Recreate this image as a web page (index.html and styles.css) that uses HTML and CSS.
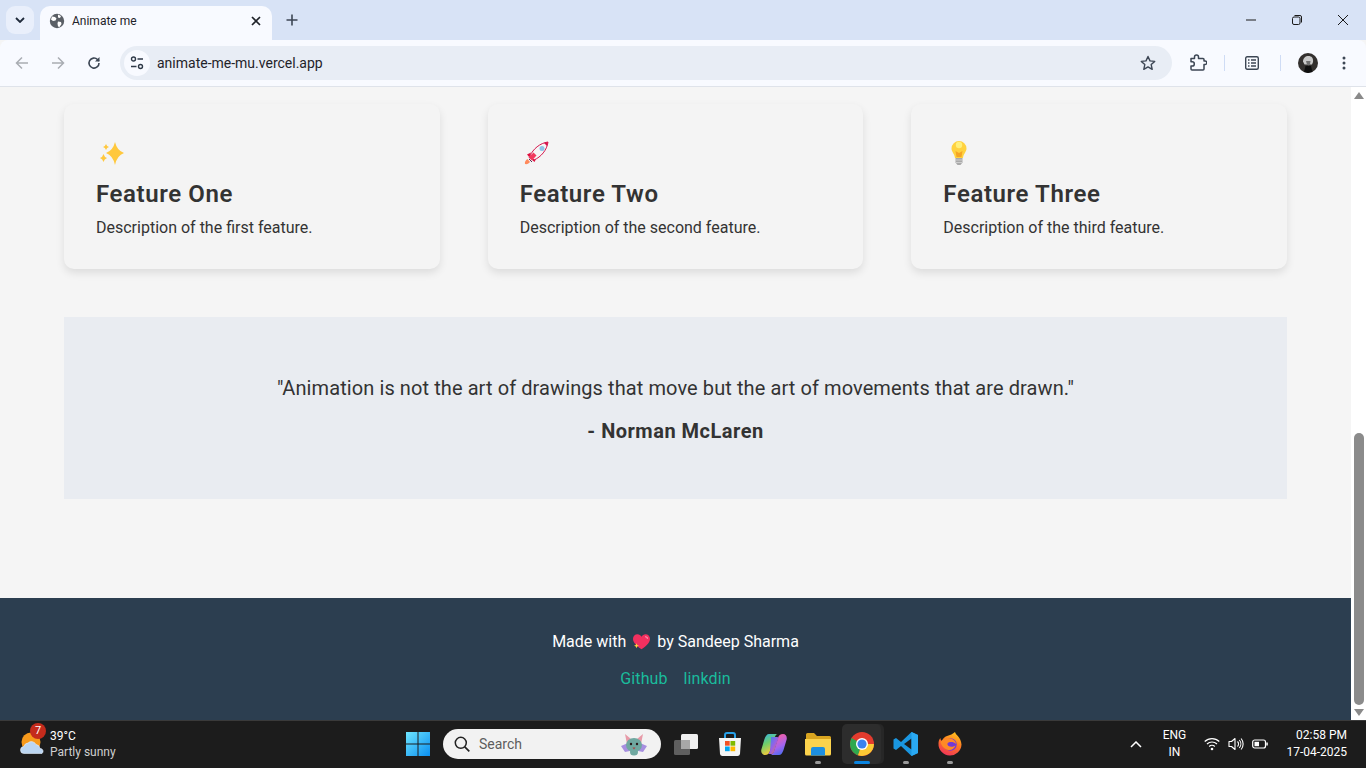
FILE: index.html
```html
<!DOCTYPE html>
<html lang="en">
<head>
<meta charset="utf-8">
<title>Animate me</title>
<link rel="stylesheet" href="styles.css">
</head>
<body>
<div class="tabbar">
  <div class="tab-search"><svg width="10" height="6" viewBox="0 0 10 6"><path d="M1 1l4 4 4-4" fill="none" stroke="#1f2a3a" stroke-width="1.8"/></svg></div>
  <div class="tab">
    <svg class="favicon" width="16" height="16" viewBox="0 0 16 16"><circle cx="8" cy="8" r="7.2" fill="#5a5f66"/><path d="M3 3.500l3 .5 1.500 1.500-1 2-2.500.5-2-1.500zM9 8.500l3 .5 .5 2-2 3-1.500-.5-.5-3zM9 1.500l3 1.500-1 2-2-.5z" fill="#fff"/></svg>
    <span class="tab-title">Animate me</span>
    <svg class="tab-close" width="10" height="10" viewBox="0 0 10 10"><path d="M1 1l8 8M9 1l-8 8" stroke="#1f2329" stroke-width="1.7"/></svg>
  </div>
  <svg class="newtab" width="12" height="12" viewBox="0 0 12 12"><path d="M6 .5v11M.5 6h11" stroke="#3c4654" stroke-width="1.6"/></svg>
  <div class="winctl">
    <svg width="10" height="10" viewBox="0 0 10 10"><path d="M0 5h10" stroke="#1a1a1a" stroke-width="1"/></svg>
    <svg width="10" height="10" viewBox="0 0 10 10"><rect x=".5" y="2" width="7.500" height="7.500" rx="1.500" fill="none" stroke="#1a1a1a"/><path d="M2.500 .5h5.500a1.500 1.500 0 0 1 1.500 1.500v5.500" fill="none" stroke="#1a1a1a"/></svg>
    <svg width="10" height="10" viewBox="0 0 10 10"><path d="M0 0l10 10M10 0l-10 10" stroke="#1a1a1a" stroke-width="1"/></svg>
  </div>
</div>
<div class="toolbar">
  <svg class="nav first" width="14" height="14" viewBox="0 0 14 14"><path d="M13 7H2M7 1.500L1.500 7 7 12.500" fill="none" stroke="#a9adb3" stroke-width="1.5"/></svg>
  <svg class="nav" width="14" height="14" viewBox="0 0 14 14"><path d="M1 7h11M7 1.500L12.500 7 7 12.500" fill="none" stroke="#a9adb3" stroke-width="1.5"/></svg>
  <svg class="nav" width="14" height="14" viewBox="0 0 14 14"><path d="M12 7a5 5 0 1 1-1.500-3.500L12 5" fill="none" stroke="#3c4654" stroke-width="1.600"/><path d="M12.500 1v4.500H8z" fill="#3c4654"/></svg>
  <div class="omnibox">
    <div class="site-btn"><svg width="14" height="14" viewBox="0 0 14 14"><circle cx="3.500" cy="3" r="2" fill="none" stroke="#2f3a48" stroke-width="1.400"/><path d="M7.500 3H13M1 10.500h5.500" stroke="#2f3a48" stroke-width="1.400"/><circle cx="10.500" cy="10.500" r="2" fill="none" stroke="#2f3a48" stroke-width="1.400"/></svg></div>
    <span class="url">animate-me-mu.vercel.app</span>
    <svg class="star" width="16" height="16" viewBox="0 0 16 16"><path d="M8 1.500l2 4.400 4.700.5-3.500 3.200 1 4.700L8 11.900l-4.200 2.400 1-4.700L1.300 6.400 6 5.900z" fill="none" stroke="#3c4654" stroke-width="1.400" stroke-linejoin="round"/></svg>
  </div>
  <svg class="ext" width="17" height="17" viewBox="0 0 17 17"><path d="M1 4.500H4.500V3a2 2 0 0 1 4 0V4.500H13a1 1 0 0 1 1 1V7h1a1.800 1.800 0 0 1 0 3.600H14V15a1 1 0 0 1-1 1H2a1 1 0 0 1-1-1V12H2.200a2 2 0 0 0 0-4.200H1z" fill="none" stroke="#3c4654" stroke-width="1.500" stroke-linejoin="round"/></svg>
  <span class="divider first-div"></span>
  <svg class="reading" width="14" height="14" viewBox="0 0 14 14"><rect x=".7" y=".7" width="12.600" height="12.600" rx="1.500" fill="none" stroke="#3c4654" stroke-width="1.400"/><path d="M3 4h1.500M6 4h5M3 7h1.500M6 7h5M3 10h1.500M6 10h5" stroke="#3c4654" stroke-width="1.300"/></svg>
  <span class="divider second-div"></span>
  <svg class="avatar" width="20" height="20" viewBox="0 0 20 20"><circle cx="10" cy="10" r="10" fill="#33302e"/><path d="M5 8.500C5 5 7.500 3 10.500 3S15.500 5 15 9l-1 2.500H6.500z" fill="#c9c9c9"/><path d="M8 8h4.500l-.5 3.500-1.500 1-1.500-1z" fill="#6f6f6f"/><path d="M6 19l1.500-6h5.500l1.500 6-4.500 1z" fill="#0e0e0e"/></svg>
  <svg class="kebab" width="4" height="14" viewBox="0 0 4 14"><circle cx="2" cy="2" r="1.500" fill="#3c4654"/><circle cx="2" cy="7" r="1.500" fill="#3c4654"/><circle cx="2" cy="12" r="1.500" fill="#3c4654"/></svg>
</div>

<div class="viewport">
  <div class="page">
    <main class="content">
      <section class="features">
        <article class="card">
          <svg class="emoji" width="28" height="28" viewBox="0 0 28 28"><path d="M17 3Q19 11.500 26 14 19 16.500 17 26 15 16.500 8 14 15 11.500 17 3z" fill="#ffc83d"/><path d="M8 5Q8.700 7.300 11 8 8.700 8.700 8 11 7.300 8.700 5 8 7.300 7.300 8 5zM5.500 15Q6.300 18 9 19 6.300 20 5.500 23 4.700 20 2 19 4.700 18 5.500 15z" fill="#ffc83d"/></svg>
          <h3 class="card-title">Feature One</h3>
          <p class="card-text">Description of the first feature.</p>
        </article>
        <article class="card">
          <svg class="emoji" width="28" height="28" viewBox="0 0 28 28"><path d="M3 25c-.5-2 .5-4 2.500-5l2.500 3c-1 1.500-3 2.500-5 2z" fill="#ff8a5c"/><path d="M5 15.500l4-2-1.500 5zM12.500 23l2-4-5 1.500z" fill="#e0103f"/><path d="M8 17C11 10 18 4 26 3c-1 8-7 15-14 18z" fill="#f5f5f5" stroke="#d6154c" stroke-width="1"/><path d="M6.500 18.500l5-5 3 3-4.500 5z" fill="#f23a5e"/><path d="M7 20l3 3" stroke="#553355" stroke-width="1"/><path d="M22 4l4-1-1 4z" fill="#d6154c"/><circle cx="20" cy="9.500" r="2.500" fill="#8cc4e8"/></svg>
          <h3 class="card-title">Feature Two</h3>
          <p class="card-text">Description of the second feature.</p>
        </article>
        <article class="card">
          <svg class="emoji" width="28" height="28" viewBox="0 0 28 28"><path d="M14 2a7.500 7.500 0 0 0-7.500 7.500c0 3.500 3 5 3.500 9.500h8c.5-4.500 3.500-6 3.500-9.500A7.500 7.500 0 0 0 14 2z" fill="#ffd23f"/><circle cx="14" cy="6" r="3.200" fill="#fff07a"/><path d="M11.500 18l-1-6 3.500 2 3.500-2-1 6z" fill="#f5a524"/><path d="M10.500 19h7v4.500l-2 2.500h-3l-2-2.500z" fill="#a9a9a9"/><path d="M10.500 21h7M11 23.500h6" stroke="#d8d8d8" stroke-width=".8"/></svg>
          <h3 class="card-title">Feature Three</h3>
          <p class="card-text">Description of the third feature.</p>
        </article>
      </section>
      <section class="quote">
        <p class="quote-text">"Animation is not the art of drawings that move but the art of movements that are drawn."</p>
        <p class="quote-author">- Norman McLaren</p>
      </section>
    </main>
    <footer class="footer">
      <p class="made">Made with
        <svg class="heart" width="17" height="16" viewBox="1 2 17 15.500"><path d="M9.500 17C3 12.500 1 9.500 1 6.500 1 4 3 2 5.500 2c1.700 0 3.200 1 4 2.500C10.300 3 11.800 2 13.500 2 16 2 18 4 18 6.500c0 3-2 6-8.500 10.500z" fill="#f2305f"/><path d="M13 4.500c1.500 0 2.500 1 2.500 2" stroke="#ff9ab5" stroke-width="1.200" fill="none"/><path d="M4.500 11l.7 1.800 1.800.7-1.800.7-.7 1.800-.7-1.800-1.800-.7 1.800-.7z" fill="#ffd23f"/></svg>
        by Sandeep Sharma</p>
      <p class="links"><a class="link" href="#">Github</a><a class="link" href="#">linkdin</a></p>
    </footer>
  </div>
  <div class="scrollbar">
    <svg width="10" height="7" viewBox="0 0 10 7"><path d="M5 0l5 7H0z" fill="#8a8a8a"/></svg>
    <div class="track"><div class="thumb"></div></div>
    <svg width="10" height="7" viewBox="0 0 10 7"><path d="M5 7l5-7H0z" fill="#8a8a8a"/></svg>
  </div>
</div>

<div class="taskbar">
  <div class="tb-left">
    <div class="weather-icon">
      <svg width="26" height="26" viewBox="0 0 26 26"><circle cx="11" cy="11" r="9.500" fill="#f79a1c"/><path d="M4 22.500a3.500 3.500 0 0 1 0-7 4.500 4.500 0 0 1 4-3.500 5 5 0 0 1 8 1.500 4.500 4.500 0 0 1 4 4 2.800 2.800 0 0 1 2 5z" fill="#bcd6f2" stroke="#e6f0fb" stroke-width=".6"/></svg>
      <span class="badge">7</span>
    </div>
    <div class="weather-text"><span class="temp">39°C</span><span class="cond">Partly sunny</span></div>
  </div>
  <div class="tb-center">
    <div class="win-btn"><svg width="24" height="24" viewBox="0 0 24 24"><defs><linearGradient id="w" x1="0" y1="0" x2="1" y2="1"><stop offset="0" stop-color="#6ee6ff"/><stop offset="1" stop-color="#0a8ef0"/></linearGradient></defs><path d="M0 0h11.500v11.500H0zM12.500 0H24v11.500H12.500zM0 12.500h11.500V24H0zM12.500 12.500H24V24H12.500z" fill="url(#w)"/></svg></div>
    <div class="search">
      <svg width="16" height="16" viewBox="0 0 16 16"><circle cx="6.800" cy="6.800" r="5.500" fill="none" stroke="#222" stroke-width="1.500"/><path d="M10.800 10.800l4.500 4.500" stroke="#222" stroke-width="1.700"/></svg>
      <span class="search-text">Search</span>
      <svg class="bat" width="26" height="24" viewBox="0 0 26 24"><path d="M0 14l7-3 2 8-5 1zM26 14l-7-3-2 8 5 1z" fill="#a78fe0"/><path d="M4 2l6 5-4 5zM22 2l-6 5 4 5z" fill="#e79aa8"/><ellipse cx="13" cy="13" rx="8" ry="7" fill="#6fa8a0"/><ellipse cx="13" cy="20" rx="4" ry="3.500" fill="#6fa8a0"/><circle cx="10" cy="12" r="1.200" fill="#2a1a1a"/><circle cx="16" cy="12" r="1.200" fill="#2a1a1a"/><path d="M11.500 15.500h3l-1.500 2z" fill="#b0413e"/></svg>
    </div>
    <div class="tb-app first-app"><svg width="26" height="26" viewBox="0 0 26 26"><rect x="1" y="9" width="16" height="15" rx="1.500" fill="#5f5f5f"/><rect x="8" y="3" width="17" height="15" rx="1.500" fill="#f0f0f0"/><rect x="8" y="9" width="9" height="9" fill="#a8a8a8"/></svg></div>
    <div class="tb-app"><svg width="26" height="26" viewBox="0 0 26 26"><path d="M8 7V4a2 2 0 0 1 2-2h6a2 2 0 0 1 2 2v3" fill="none" stroke="#27a0e8" stroke-width="2"/><path d="M2 7h22l-1 16a2.500 2.500 0 0 1-2.500 2h-15A2.500 2.500 0 0 1 3 23z" fill="#f4f4f4"/><rect x="8" y="10" width="4.700" height="4.700" fill="#f25022"/><rect x="13.500" y="10" width="4.700" height="4.700" fill="#7fba00"/><rect x="8" y="15.500" width="4.700" height="4.700" fill="#00a4ef"/><rect x="13.500" y="15.500" width="4.700" height="4.700" fill="#ffb900"/></svg></div>
    <div class="tb-app"><svg width="26" height="26" viewBox="0 0 26 26"><defs><linearGradient id="c1" x1="0" y1="0" x2=".4" y2="1"><stop offset="0" stop-color="#2fb0ee"/><stop offset=".5" stop-color="#6fcf6a"/><stop offset="1" stop-color="#f9c93a"/></linearGradient><linearGradient id="c2" x1=".6" y1="0" x2="1" y2="1"><stop offset="0" stop-color="#f25fa8"/><stop offset=".5" stop-color="#a564ee"/><stop offset="1" stop-color="#2f6ff0"/></linearGradient><linearGradient id="c3" x1="0" y1="0" x2="1" y2="1"><stop offset="0" stop-color="#2f8fe8"/><stop offset=".5" stop-color="#9a5fe6"/><stop offset="1" stop-color="#f2803a"/></linearGradient></defs><path d="M8 3h8.500c-2 .5-2 2-3 4L9 20c-.6 2.500-2.500 4-5 4-3 0-4.500-3-3.500-6l3-10C4.500 5 6 3 8 3z" fill="url(#c1)"/><path d="M18 24H9.500c2-.5 2.500-2 3.500-4L17 7c.6-2.500 2.500-4 5-4 3 0 4.500 3 3.500 6l-3 10C21.500 22 20 24 18 24z" fill="url(#c2)"/><path d="M10 6h6.500l1 1-4.500 14-1.500 2H7.500l1.500-3z" fill="url(#c3)"/></svg></div>
    <div class="tb-app running"><svg width="26" height="26" viewBox="0 0 26 26"><path d="M1 3.500A1.500 1.500 0 0 1 2.500 2H9l3 3h12.500A1.500 1.500 0 0 1 26 6.500V9H1z" fill="#d9a520"/><path d="M0 8h26v15a1.500 1.500 0 0 1-1.500 1.500h-23A1.500 1.500 0 0 1 0 23z" fill="#fcd34d"/><path d="M6 24.500V18a2 2 0 0 1 2-2h10a2 2 0 0 1 2 2v6.500z" fill="#1d8fe0"/></svg><span class="dot"></span></div>
    <div class="tb-app active"><svg width="26" height="26" viewBox="0 0 26 26"><circle cx="13" cy="13" r="12" fill="#e33b2e"/><path d="M13 13L2.600 7a12 12 0 0 0 6.400 17.300z" fill="#2fa84f"/><path d="M13 13l-4 11.300A12 12 0 0 0 25 13z" fill="#fcc934"/><circle cx="13" cy="13" r="6" fill="#fff"/><circle cx="13" cy="13" r="4.600" fill="#3b82f0"/></svg><span class="dot wide"></span></div>
    <div class="tb-app running"><svg width="26" height="26" viewBox="0 0 26 26"><path d="M18.500 1L25 4v18l-6.500 3L8 15l-5 4-2.500-1.500v-9L3 7l5 4z" fill="#1a96e0"/><path d="M18.500 7.500L11 13l7.500 5.500z" fill="#1c1c1c"/><path d="M18.500 1L25 4v18l-6.500 3z" fill="#2aa9f2"/></svg><span class="dot"></span></div>
    <div class="tb-app running"><svg width="26" height="26" viewBox="0 0 26 26"><defs><linearGradient id="f" x1=".7" y1="0" x2=".3" y2="1"><stop offset="0" stop-color="#ffc21f"/><stop offset=".45" stop-color="#ff7a22"/><stop offset="1" stop-color="#f0325a"/></linearGradient></defs><path d="M18 1c.5 3 6 5 6.500 12.500a11.500 11.500 0 1 1-23-1c0-2 .7-4 1.800-5.500.2 1.500.8 2.500 1.700 3 .8-2.500 2.500-4 5-5 3-1 6-2 8-4z" fill="url(#f)"/><circle cx="13.500" cy="13.500" r="6.200" fill="#7339d6"/><path d="M3.500 11c2-3 6-4.500 10-3.500 3 .7 5.500 3 5.500 5.500-2-2-5-2.500-7.500-1.500-1.500.6-1.500 2.500 0 3.500 2 1.300 5 .8 7-.5-1 3-4 5-7 4.500-4-.5-7-4-8-8z" fill="#ff8a25"/></svg><span class="dot"></span></div>
  </div>
  <div class="tb-right">
    <svg class="caret" width="12" height="7" viewBox="0 0 12 7"><path d="M1 6l5-5 5 5" fill="none" stroke="#fff" stroke-width="1.500"/></svg>
    <div class="lang"><span>ENG</span><span>IN</span></div>
    <svg class="tray first-tray" width="16" height="14" viewBox="0 0 16 14"><path d="M.7 4.500a10.500 10.500 0 0 1 14.600 0M3 7a7.200 7.200 0 0 1 10 0M5.200 9.500a4 4 0 0 1 5.600 0" fill="none" stroke="#fff" stroke-width="1.200"/><circle cx="8" cy="12" r="1.300" fill="#fff"/></svg>
    <svg class="tray" width="16" height="14" viewBox="0 0 16 14"><path d="M1 4.500h2.500L7 1.500v11l-3.500-3H1z" fill="none" stroke="#fff" stroke-width="1.100" stroke-linejoin="round"/><path d="M9.500 4.500a3.500 3.500 0 0 1 0 5M11.300 3a6 6 0 0 1 0 8M13.100 1.500a8.500 8.500 0 0 1 0 11" fill="none" stroke="#fff" stroke-width="1.100"/></svg>
    <svg class="tray" width="16" height="14" viewBox="0 0 16 14"><rect x=".7" y="3" width="12.800" height="8" rx="2" fill="none" stroke="#fff" stroke-width="1.200"/><rect x="2.500" y="4.800" width="4.500" height="4.400" fill="#fff"/><rect x="14.300" y="5.500" width="1.500" height="3" fill="#fff"/></svg>
    <div class="clock"><span>02:58 PM</span><span>17-04-2025</span></div>
  </div>
</div>
</body>
</html>
```
FILE: styles.css
```css
* { box-sizing: border-box; }
html, body { margin: 0; height: 100%; }
body {
  display: flex;
  flex-direction: column;
  height: 768px;
  overflow: hidden;
  font-family: Roboto, "Liberation Sans", sans-serif;
  color: #333;
  background: #f5f5f5;
}
svg { display: block; flex: none; }

/* tab strip */
.tabbar {
  flex: none;
  height: 40px;
  background: #d8e3f6;
  display: flex;
  align-items: flex-start;
  padding: 6px 0 0 6px;
}
.tab-search {
  width: 28px;
  height: 28px;
  border-radius: 9px;
  background: #e9effb;
  display: flex;
  align-items: center;
  justify-content: center;
}
.tab {
  width: 232px;
  height: 34px;
  margin-left: 6px;
  background: #f8faff;
  border-radius: 10px 10px 0 0;
  display: flex;
  align-items: center;
  padding: 0 11px 5px 9px;
}
.tab-title {
  margin-left: 7px;
  flex: 1;
  font-size: 12px;
  line-height: 16px;
  padding-top: 1px;
  color: #1f2329;
}
.newtab { margin: 8px 0 0 14px; }
.winctl {
  margin: 9px 0 0 auto;
  display: flex;
  gap: 36px;
  padding-right: 18px;
}

/* toolbar */
.toolbar {
  flex: none;
  height: 47px;
  background: #f8faff;
  border-bottom: 1px solid #dfe3ea;
  border-radius: 8px 8px 0 0;
  display: flex;
  align-items: center;
  padding: 0 0 1px 15px;
}
.nav { margin-left: 22px; }
.nav.first { margin-left: 0; }
.omnibox {
  margin-left: 19px;
  width: 1052px;
  height: 34px;
  border-radius: 17px;
  background: #e8edf5;
  display: flex;
  align-items: center;
  padding: 0 16px 0 4px;
}
.site-btn {
  width: 26px;
  height: 26px;
  border-radius: 50%;
  background: #f8faff;
  display: flex;
  align-items: center;
  justify-content: center;
}
.url {
  margin-left: 7px;
  flex: 1;
  font-size: 14px;
  color: #1f2329;
}
.ext { margin-left: 18px; }
.divider { width: 1px; height: 16px; background: #cfdcf5; flex: none; }
.first-div { margin-left: 17px; }
.reading { margin-left: 20px; }
.second-div { margin-left: 21px; }
.avatar { margin-left: 17px; }
.kebab { margin-left: 24px; }

/* page */
.viewport { flex: 1; min-height: 0; display: flex; }
.page {
  flex: 1;
  min-width: 0;
  display: flex;
  flex-direction: column;
  background: #f5f5f5;
}
.content { flex: 1; padding: 17px 64px 0; }
.features {
  display: grid;
  grid-template-columns: repeat(3, 1fr);
  gap: 48px;
}
.card {
  height: 165px;
  padding: 32px;
  border-radius: 10px;
  background: #f4f4f4;
  box-shadow: 0 4px 8px rgba(0, 0, 0, 0.1);
}
.emoji { margin: 3px 0 0 2px; }
.card-title {
  margin: 10px 0 0;
  font-size: 24px;
  line-height: 34px;
  font-weight: 600;
  letter-spacing: 0.6px;
  color: #333;
}
.card-text {
  margin: 5px 0 0;
  font-size: 16px;
  line-height: 24px;
  color: #333;
}
.quote {
  margin-top: 48px;
  height: 182px;
  background: #e9ecf1;
  padding-top: 57px;
  text-align: center;
}
.quote-text {
  margin: 0;
  font-size: 20px;
  line-height: 28px;
  letter-spacing: 0.09px;
  color: #333;
}
.quote-author {
  margin: 15px 0 0;
  font-size: 20px;
  line-height: 28px;
  font-weight: 700;
  letter-spacing: 0.5px;
  color: #333;
}
.footer {
  flex: none;
  height: 122px;
  background: #2c3e50;
  color: #fff;
  text-align: center;
  padding-top: 32px;
}
.made {
  margin: 0;
  font-size: 16px;
  line-height: 24px;
  display: flex;
  justify-content: center;
  align-items: center;
  gap: 7px;
}
.links {
  margin: 13px 0 0;
  font-size: 16px;
  line-height: 24px;
  letter-spacing: 0.1px;
  display: flex;
  justify-content: center;
  gap: 16px;
}
.link { color: #1abc9c; text-decoration: none; }

.scrollbar {
  flex: none;
  width: 15px;
  background: #fff;
  display: flex;
  flex-direction: column;
  align-items: center;
  padding: 5px 0 4px;
}
.track { flex: 1; width: 100%; display: flex; flex-direction: column; justify-content: flex-end; padding: 0 2.5px 4px; }
.thumb { height: 272px; background: #8b8b8b; border-radius: 5px; }

/* taskbar */
.taskbar {
  flex: none;
  height: 48px;
  background: #1c1c1c;
  border-top: 1px solid #3a3a3a;
  padding-bottom: 1px;
  display: flex;
  align-items: center;
  color: #fff;
}
.tb-left {
  width: 396px;
  flex: none;
  display: flex;
  align-items: center;
  padding-left: 20px;
}
.weather-icon { width: 26px; height: 26px; position: relative; }
.badge {
  position: absolute;
  left: 10px;
  top: -8px;
  width: 16px;
  height: 16px;
  border-radius: 50%;
  background: #c42b1c;
  font-size: 11px;
  line-height: 16px;
  text-align: center;
  color: #fff;
}
.weather-text { margin-left: 4px; display: flex; flex-direction: column; font-size: 12px; line-height: 16px; }
.cond { color: #d0d0d0; }
.tb-center { display: flex; align-items: center; flex: none; }
.win-btn { width: 44px; display: flex; justify-content: center; }
.search {
  margin-left: 3px;
  width: 218px;
  height: 30px;
  border-radius: 15px;
  background: #f2f2f2;
  display: flex;
  align-items: center;
  padding: 0 14px 0 11px;
}
.search-text { margin-left: 9px; flex: 1; font-size: 14px; color: #5d5d5d; }
.first-app { margin-left: 3px; }
.tb-app {
  width: 44px;
  height: 40px;
  display: flex;
  align-items: center;
  justify-content: center;
  position: relative;
}
.tb-app.active::before {
  content: "";
  position: absolute;
  top: 0;
  bottom: 0;
  left: 2px;
  right: 3px;
  background: #2d2d2d;
  border-radius: 5px;
  box-shadow: 3px 0 0 #272727;
}
.tb-app.active svg { position: relative; }
.dot {
  position: absolute;
  bottom: 0;
  left: 19px;
  width: 6px;
  height: 3px;
  border-radius: 2px;
  background: #9a9a9a;
}
.dot.wide { left: 14px; width: 16px; background: #0a84e0; }
.tb-right {
  margin-left: auto;
  display: flex;
  align-items: center;
  padding-right: 19px;
}
.caret { margin-right: 12px; }
.lang {
  width: 40px;
  display: flex;
  flex-direction: column;
  align-items: center;
  font-size: 12px;
  line-height: 17px;
}
.tray { margin-left: 8px; }
.first-tray { margin-left: 10px; }
.clock {
  margin-left: 18px;
  display: flex;
  flex-direction: column;
  align-items: flex-end;
  font-size: 12px;
  line-height: 17px;
}
```
